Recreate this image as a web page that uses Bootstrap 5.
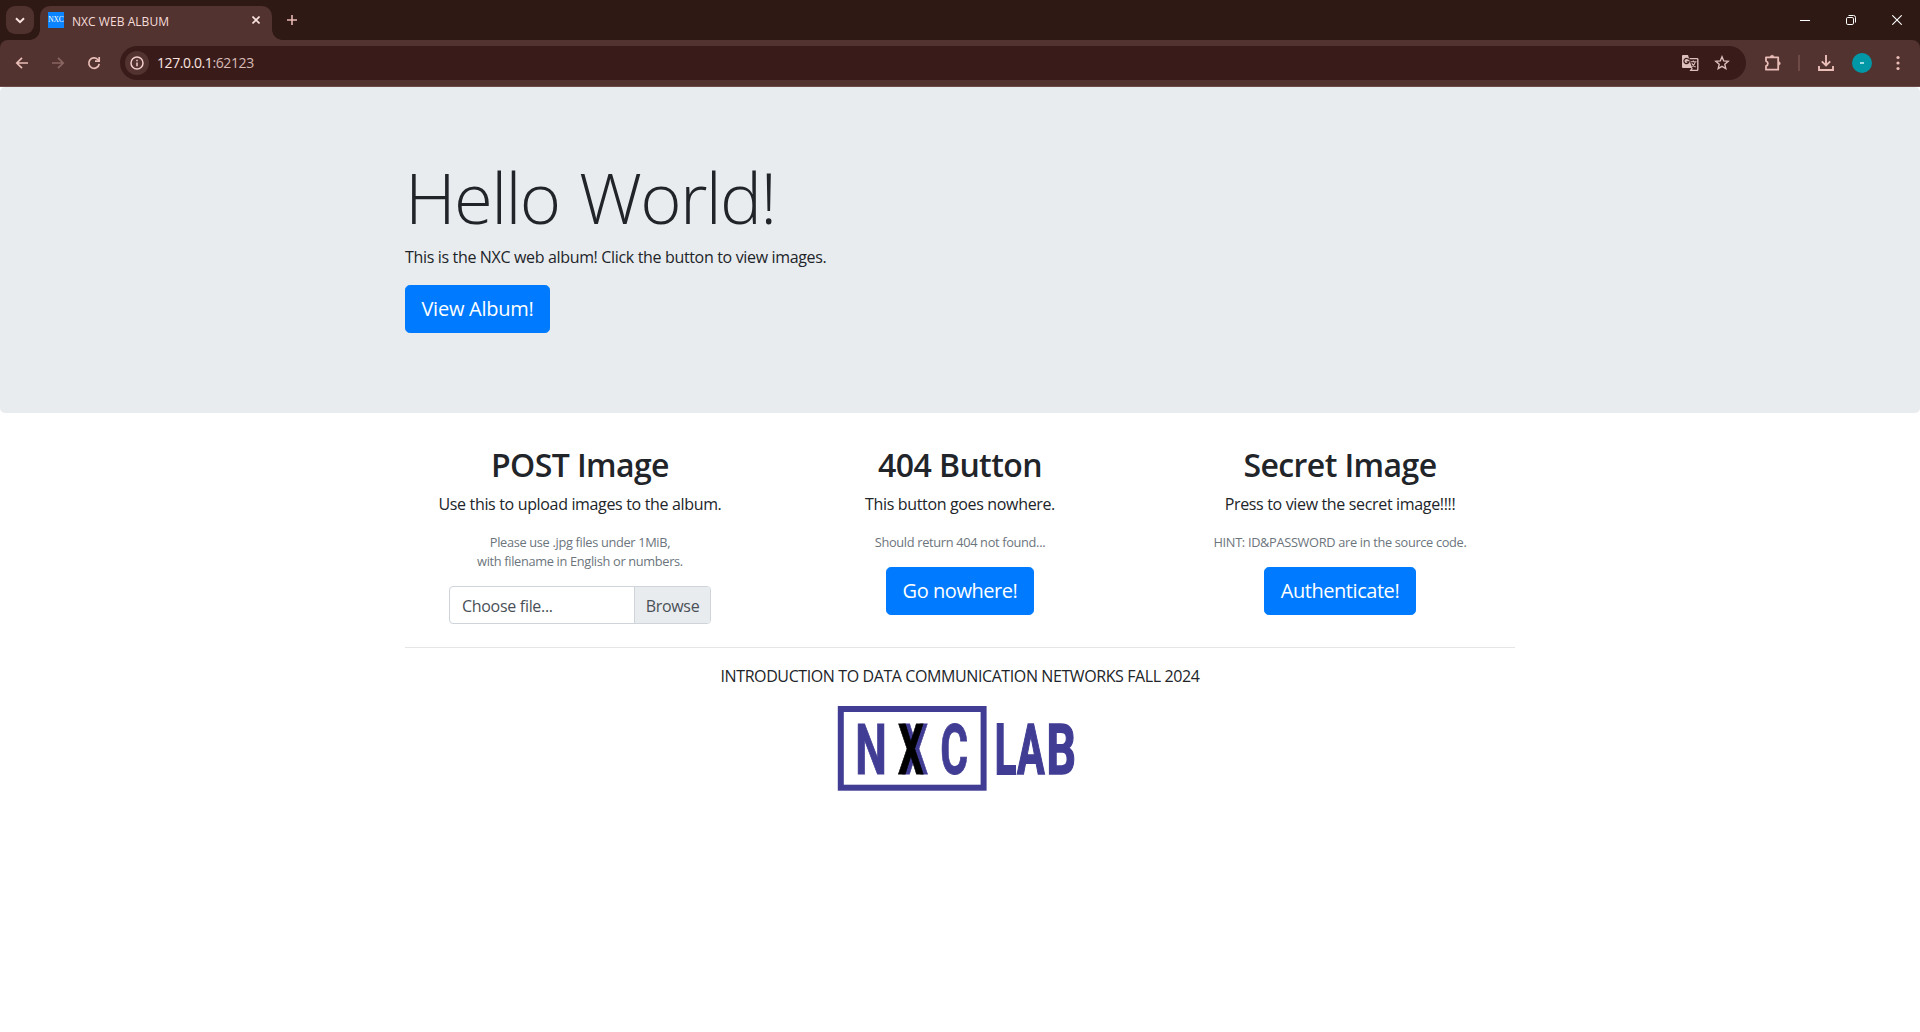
<!DOCTYPE html>
<html lang="en">
<head>
<meta charset="utf-8">
<title>NXC WEB ALBUM</title>
<link href="https://cdn.jsdelivr.net/npm/bootstrap@5.3.0/dist/css/bootstrap.min.css" rel="stylesheet">
<style>
body{font-family:"Open Sans","Noto Sans",sans-serif;font-size:16px;color:#212529;background:#fff;height:1032px;overflow:hidden}
svg{display:block;flex:none}
.tabstrip{height:40px;background:#2f1915;padding-left:6px}
.tab-search{width:28px;height:28px;border-radius:9px;background:#4f312e;margin-top:6px}
.tab-active{position:relative;width:232px;height:34px;margin:6px 0 0 6px;background:#523330;border-radius:10px 10px 0 0;padding:0 12px 6px 8px;color:#f6dcd8;font-size:12px}
.tab-active::before,.tab-active::after{content:"";position:absolute;bottom:0;width:10px;height:10px}
.tab-active::before{left:-10px;background:radial-gradient(circle at 0 0,transparent 9.5px,#523330 10px)}
.tab-active::after{right:-10px;background:radial-gradient(circle at 100% 0,transparent 9.5px,#523330 10px)}
.tab-title{letter-spacing:.05px;margin-left:8px;padding-top:3px}
.favi{width:16px;height:16px;background:#0a84ff;color:#fff;font:7.5px/16px "Liberation Serif",serif;letter-spacing:-.1px}
.plus-icon{margin-left:15px}
.win-controls{gap:36px;padding-right:18px}
.toolbar-wrap{background:#2f1915}
.toolbar{height:47px;background:#523330;border-bottom:1px solid #6b4b47;border-radius:8px 8px 0 0;padding:6px 14px}
.omni{height:34px;width:1626px;border-radius:17px;background:#391c1a;padding:0 15px 0 5px;margin-left:18px}
.info-chip{width:24px;height:24px;border-radius:50%;background:#523330}
.addr{font-size:14px;color:#fbe4e0;margin-left:8px;letter-spacing:-.4px;padding-bottom:1px}
.addr span{color:#d8bab5}
.avatar{width:20px;height:20px;border-radius:50%;background:#0097a7}
.vsep{width:2px;height:16px;background:#6f4b47;margin-left:16px}
.gap-18{margin-left:18px}
.gap-20{margin-left:20px}
.gap-24{margin-left:24px}
.star-icon{margin:0 1px 0 15px}
.jumbo{background:#e9ecef;padding:64px 0;border-radius:5px;margin-bottom:32px;height:326.4px}
.page-box{width:1140px;padding:0 15px;margin:0 auto}
.hello{font-size:70.6px;font-weight:300;line-height:86.4px;height:86.4px;padding-top:3px;margin-bottom:8px;letter-spacing:-1.7px;word-spacing:3px}
.body-p{letter-spacing:-.34px;margin-bottom:16px;line-height:24px}
.foot-p{letter-spacing:-.4px}
.btn-old{--bs-btn-bg:#007bff;--bs-btn-border-color:#007bff;--bs-btn-color:#fff;font-size:20px;line-height:30px;padding:8px 0 6px;border-radius:4.8px;height:48px;letter-spacing:-.45px}
.btn-w1{width:145px;letter-spacing:-.25px}
.btn-w2{width:148px}
.btn-w3{width:152px}
.third{width:380px;text-align:center}
.third h2{font-size:32px;font-weight:550;line-height:38.4px;height:38.4px;padding-top:1px;margin-bottom:8px;letter-spacing:-.6px}
.hint{font-size:12.8px;line-height:19.2px;color:#6c757d;padding-top:1px;margin-bottom:15px;letter-spacing:-.33px}
.filebox{width:262px;height:38px;border:1px solid #ced4da;border-radius:4px;color:#495057;letter-spacing:-.3px;overflow:hidden}
.file-name{padding:1px 0 0 12px}
.file-browse{width:76px;padding-top:1px;background:#e9ecef;border-left:1px solid #ced4da}
.cols{margin:0 -15px}
.rule{height:1px;background:#e5e5e5;margin:22.6px 0 16px}
</style>
<script src="https://cdn.jsdelivr.net/npm/bootstrap@5.3.0/dist/js/bootstrap.bundle.min.js"></script>
</head>
<body>
<header>
<div class="tabstrip d-flex">
  <div class="tab-search d-flex align-items-center justify-content-center"><svg width="10" height="7" fill="none" stroke="#fbe4e0" stroke-width="2"><path d="M1 1.2l4 4 4-4"/></svg></div>
  <div class="tab-active d-flex align-items-center">
    <div class="favi text-center">NXC</div>
    <div class="tab-title flex-grow-1">NXC WEB ALBUM</div>
    <svg width="8" height="8" stroke="#fbe4e0" stroke-width="1.6"><path d="M.5.5l7 7M7.5.5l-7 7"/></svg>
  </div>
  <svg class="plus-icon align-self-center" width="10" height="10" stroke="#e8b8b2" stroke-width="1.6"><path d="M5 0v10M0 5h10"/></svg>
  <div class="win-controls ms-auto d-flex align-items-center">
    <svg width="10" height="10" stroke="#fff"><path d="M0 5.500h10"/></svg>
    <svg width="10" height="10" fill="none" stroke="#fff"><rect x=".5" y="2.5" width="7" height="7" rx="1.3"/><path d="M2.5.5H7.5a2 2 0 0 1 2 2V7.5"/></svg>
    <svg width="10" height="10" stroke="#fff" stroke-width="1.1"><path d="M.3.3l9.400 9.400M9.700.3L.3 9.700"/></svg>
  </div>
</div>
<div class="toolbar-wrap"><div class="toolbar d-flex align-items-center">
  <svg width="16" height="16" fill="none" stroke="#eabdb7" stroke-width="1.7"><path d="M14 8H3M8 2.8L2.8 8 8 13.2"/></svg>
  <svg class="gap-20" width="16" height="16" fill="none" stroke="#8a6662" stroke-width="1.7"><path d="M2 8h11M8 2.8L13.2 8 8 13.2"/></svg>
  <svg class="gap-20" width="16" height="16" fill="none" stroke="#eabdb7" stroke-width="1.7"><path d="M13.2 8.8A5.2 5.2 0 1 1 11.8 4.5L13 5.7"/><path d="M13.2 2v4.2H9"/></svg>
  <div class="omni d-flex align-items-center">
    <div class="info-chip d-flex align-items-center justify-content-center"><svg width="14" height="14" fill="none" stroke="#f3cfca" stroke-width="1.5"><circle cx="7" cy="7" r="6"/><path d="M7 6.4v3.8M7 3.7v1.5"/></svg></div>
    <div class="addr flex-grow-1">127.0.0.1<span>:62123</span></div>
    <svg width="18" height="18" viewBox="0 0 18 18"><path fill="#dcbfbb" d="M2 1h5l1 3.200h-.5L11.400 14H2a1 1 0 0 1-1-1V2a1 1 0 0 1 1-1z"/><path d="M7.800 5.800A2.600 2.600 0 1 0 8 7.800H5.600" fill="none" stroke="#391c1a" stroke-width="1.2"/><path d="M8.500 4.600H16a.8.8 0 0 1 .8.8v10.200a.8.8 0 0 1-.8.8H9.800l1.500-2.300" fill="none" stroke="#dcbfbb" stroke-width="1.4"/><path d="M9.500 7.800h6M12.300 6.500v1.300M14.300 8c-.4 2-1.800 3.400-3.400 4.500M10.800 9.300c.7 1.500 2 2.800 3.800 3.600" fill="none" stroke="#dcbfbb" stroke-width="1.1"/></svg>
    <svg class="star-icon" width="16" height="16" fill="none" stroke="#dcbfbb" stroke-width="1.4"><path d="M8 1.8l1.7 4.1 4.5.4-3.4 3 1 4.3L8 11.3l-3.800 2.300 1-4.300-3.400-3 4.500-.4z"/></svg>
  </div>
  <svg class="gap-18" width="18" height="18" fill="none" stroke="#eabdb7" stroke-width="1.8"><path d="M2 3.300h12.200V15.700H2v-3.600a2.600 2.600 0 0 0 0-5z" stroke-linejoin="round"/><path d="M6.300 3a1.800 1.800 0 0 1 3.600 0zM14.600 7.700a1.700 1.700 0 0 1 0 3.400z" fill="#eabdb7" stroke-width=".6"/></svg>
  <div class="vsep"></div>
  <svg class="gap-18" width="16" height="16" fill="none" stroke="#eabdb7" stroke-width="1.9"><path d="M8 0v10M3.800 6.300L8 10.500l4.200-4.200M1 11v4h14v-4"/></svg>
  <div class="avatar gap-18 d-flex align-items-center justify-content-center"><svg width="4" height="2"><rect width="4" height="2" fill="#9bdbe2"/></svg></div>
  <svg class="gap-24" width="4" height="16" fill="#eabdb7"><circle cx="2" cy="2.5" r="1.6"/><circle cx="2" cy="8" r="1.6"/><circle cx="2" cy="13.5" r="1.6"/></svg>
</div></div>
</header>
<main>
<section class="jumbo">
  <div class="page-box">
    <h1 class="hello">Hello World!</h1>
    <p class="body-p">This is the NXC web album! Click the button to view images.</p>
    <a class="btn btn-primary btn-old btn-w1">View Album!</a>
  </div>
</section>
<div class="page-box">
  <div class="cols d-flex">
    <section class="third">
      <h2>POST Image</h2>
      <p class="body-p">Use this to upload images to the album.</p>
      <p class="hint">Please use .jpg files under 1MiB,<br>with filename in English or numbers.</p>
      <div class="filebox d-flex mx-auto">
        <div class="file-name flex-grow-1 d-flex align-items-center">Choose file...</div>
        <div class="file-browse d-flex align-items-center justify-content-center">Browse</div>
      </div>
    </section>
    <section class="third">
      <h2>404 Button</h2>
      <p class="body-p">This button goes nowhere.</p>
      <p class="hint">Should return 404 not found...</p>
      <a class="btn btn-primary btn-old btn-w2">Go nowhere!</a>
    </section>
    <section class="third">
      <h2>Secret Image</h2>
      <p class="body-p">Press to view the secret image!!!!</p>
      <p class="hint">HINT: ID&amp;PASSWORD are in the source code.</p>
      <a class="btn btn-primary btn-old btn-w3">Authenticate!</a>
    </section>
  </div>
  <div class="rule"></div>
  <p class="body-p foot-p text-center">INTRODUCTION TO DATA COMMUNICATION NETWORKS FALL 2024</p>
  <svg class="mx-auto" width="250" height="90" viewBox="835 704 250 90" font-family="Roboto,sans-serif" font-weight="700" font-size="71" fill="#413d94" stroke-width=".9">
    <rect x="840.8" y="709" width="142.8" height="78.700" fill="none" stroke="#413d94" stroke-width="6"/>
    <g stroke="#413d94">
    <text transform="translate(855.2 774) scale(.63 1)">N</text>
    <text transform="translate(902.2 774) scale(.57 1)">X</text>
    <text transform="translate(940.2 774) scale(.6 1)">C</text>
    <text transform="translate(994.8 774.300) scale(.56 1)" stroke-width="2">L</text>
    <text transform="translate(1017 774.300) scale(.58 1)" stroke-width="1.600">A</text>
    <text transform="translate(1046.500 774.300) scale(.65 1)" stroke-width="1.600">B</text>
    </g>
    <text transform="translate(898 774) scale(.57 1)" fill="#000" stroke="#000">X</text>
  </svg>
</div>
</main>
</body>
</html>
